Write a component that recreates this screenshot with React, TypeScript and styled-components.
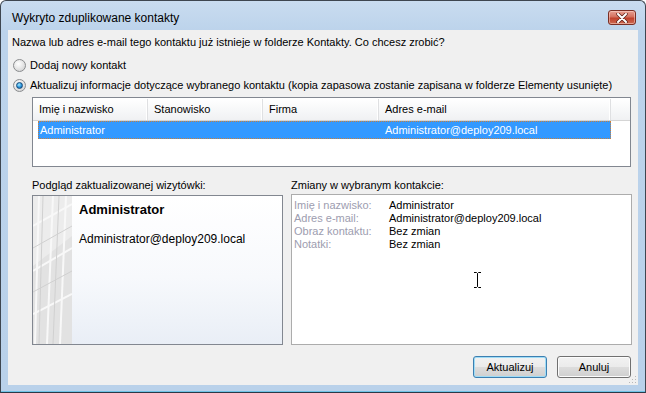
import React from 'react';
import styled, { createGlobalStyle } from 'styled-components';

const GlobalStyle = createGlobalStyle`
  html, body {
    margin: 0;
    padding: 0;
    background: #ffffff;
  }
  body {
    font-family: "Liberation Sans", Arial, sans-serif;
    font-size: 11px;
    color: #000;
  }
  * {
    box-sizing: border-box;
  }
`;

const Window = styled.div`
  width: 646px;
  height: 393px;
  display: flex;
  flex-direction: column;
  border: 1px solid #3e4650;
  border-bottom-color: #2a3a48;
  border-radius: 6px 6px 0 0;
  background: linear-gradient(180deg, #c9dcf0 0px, #bcd3eb 30px, #b9d1ea 100%);
  box-shadow: inset 0 -1px 0 #6fc3e6;
  overflow: hidden;
`;

const TitleBar = styled.div`
  height: 29px;
  flex: none;
  display: flex;
  align-items: center;
  justify-content: space-between;
  padding: 4px 9px 0 11px;
`;

const Title = styled.span`
  font-size: 12px;
  color: #000;
`;

const CloseButton = styled.div`
  width: 28px;
  height: 15px;
  border: 1px solid #7a2e24;
  border-radius: 3px;
  background: linear-gradient(180deg, #e8a093 0%, #d4705e 45%, #c0412c 55%, #cc6a52 100%);
  box-shadow: inset 0 0 0 1px rgba(255, 220, 210, 0.5);
  display: flex;
  align-items: center;
  justify-content: center;
`;

const Content = styled.div`
  flex: 1;
  margin: 0 7px 7px 7px;
  background: #f0f0f0;
  padding: 0 7px 0 4px;
  position: relative;
  display: flex;
  flex-direction: column;
`;

const Prompt = styled.div`
  margin-top: 5px;
  line-height: 14px;
  white-space: nowrap;
`;

const RadioGroup = styled.div`
  margin-top: 6px;
  display: flex;
  flex-direction: column;
`;

const RadioRow = styled.label`
  height: 20px;
  display: flex;
  align-items: center;
  gap: 4px;
  white-space: nowrap;
`;

const RadioCircle = styled.span<{ $checked?: boolean }>`
  width: 13px;
  height: 13px;
  margin-left: 1px;
  border-radius: 50%;
  border: 1px solid #8a8c8e;
  background: radial-gradient(circle at 40% 35%, #ffffff 0%, #e8e8e8 45%, #c9cacb 100%);
  display: flex;
  align-items: center;
  justify-content: center;
  flex: none;

  &::after {
    content: '';
    display: ${(p) => (p.$checked ? 'block' : 'none')};
    width: 7px;
    height: 7px;
    border-radius: 50%;
    border: 1px solid #174b7a;
    background: radial-gradient(circle at 40% 35%, #a8ecff 0%, #2f9ae0 50%, #0b4f8e 100%);
    box-sizing: border-box;
  }
`;

const Table = styled.div`
  margin-left: 20px;
  margin-top: 2px;
  height: 70px;
  border: 1px solid #828790;
  background: #ffffff;
  padding-top: 1px;
  display: flex;
  flex-direction: column;
`;

const HeaderRow = styled.div`
  height: 22px;
  display: flex;
  background: linear-gradient(180deg, #ffffff 0%, #f7f8f9 50%, #f0f1f3 100%);
  border-bottom: 1px solid #d5d5d5;
`;

const HeaderCell = styled.div<{ $w?: number }>`
  ${(p) => (p.$w ? `width: ${p.$w}px;` : 'flex: 1;')}
  flex-shrink: 0;
  padding-left: 6px;
  line-height: 21px;
  border-right: 1px solid #dfe0e2;
  box-shadow: inset -1px 0 0 #ffffff;
  white-space: nowrap;
`;

const HeaderFiller = styled.div`
  flex: 1;
`;

const DataRow = styled.div`
  margin-left: 5px;
  width: 573px;
  height: 18px;
  display: flex;
  background: #3399ff;
  border: 1px dotted #c87f3a;
  color: #ffffff;
`;

const DataCell = styled.div<{ $w?: number; $pad: number }>`
  ${(p) => (p.$w ? `width: ${p.$w}px;` : 'flex: 1;')}
  flex-shrink: 0;
  padding-left: ${(p) => p.$pad}px;
  line-height: 16px;
  white-space: nowrap;
`;

const Panels = styled.div`
  margin-left: 20px;
  margin-top: 11px;
  display: grid;
  grid-template-columns: 251px 341px;
  column-gap: 8px;
`;

const PanelLabel = styled.div`
  height: 16px;
  line-height: 15px;
  white-space: nowrap;
`;

const Card = styled.div`
  height: 150px;
  margin-top: 1px;
  border: 1px solid #828790;
  display: flex;
`;

const CardStrip = styled.div`
  width: 39px;
  flex: none;
  background: linear-gradient(180deg, #d9d9d9 0%, #e6e6e6 50%, #eeeeee 100%);
  overflow: hidden;
`;

const CardBody = styled.div`
  flex: 1;
  padding: 6px 0 0 7px;
  background: linear-gradient(180deg, #ffffff 0%, #f7f9fc 55%, #e9eef6 100%);
`;

const CardName = styled.div`
  font-size: 13px;
  font-weight: bold;
  line-height: 16px;
`;

const CardEmail = styled.div`
  margin-top: 14px;
  font-size: 12px;
  line-height: 14px;
`;

const ChangesBox = styled.div`
  height: 151px;
  border: 1px solid #acacac;
  background: #ffffff;
  padding: 4px 2px;
  position: relative;
  display: grid;
  grid-template-columns: 95px 1fr;
  grid-auto-rows: 13px;
  align-content: start;
`;

const ChangeKey = styled.div`
  color: #9d9daf;
  line-height: 13px;
  white-space: nowrap;
`;

const ChangeValue = styled.div`
  line-height: 13px;
  white-space: nowrap;
`;

const Cursor = styled.svg`
  position: absolute;
  left: 182px;
  top: 77px;
`;

const ButtonRow = styled.div`
  margin-top: 11px;
  display: flex;
  justify-content: flex-end;
  gap: 10px;
`;

const Button = styled.button<{ $default?: boolean }>`
  width: 74px;
  height: 22px;
  padding: 0;
  font-family: "Liberation Sans", Arial, sans-serif;
  font-size: 11px;
  color: #000;
  border-radius: 3px;
  border: 1px solid ${(p) => (p.$default ? '#3c7fb1' : '#707070')};
  background: linear-gradient(180deg, #f2f2f2 0%, #ebebeb 49%, #dddddd 50%, #cfcfcf 100%);
  box-shadow: inset 0 0 0 1px ${(p) => (p.$default ? '#9fdcf6' : '#fcfcfc')};
`;

const Grip = styled.svg`
  position: absolute;
  right: 1px;
  bottom: 1px;
`;

const StripArt = () => (
  <svg width="39" height="148" viewBox="0 0 39 148">
    <rect width="39" height="148" fill="#e2e2e2" />
    <path d="M0 0 L39 0 L39 40 L0 70 Z" fill="#ececec" />
    <g stroke="#f8f8f8" strokeWidth="2" fill="none">
      <line x1="6" y1="0" x2="2" y2="148" />
      <line x1="20" y1="0" x2="14" y2="148" />
      <line x1="33" y1="0" x2="27" y2="148" />
      <line x1="0" y1="30" x2="39" y2="8" />
      <line x1="0" y1="75" x2="39" y2="52" />
      <line x1="0" y1="118" x2="39" y2="98" />
    </g>
    <g stroke="#d0d0d0" strokeWidth="1" fill="none">
      <line x1="10" y1="0" x2="6" y2="148" />
      <line x1="26" y1="0" x2="20" y2="148" />
      <line x1="0" y1="52" x2="39" y2="30" />
      <line x1="0" y1="96" x2="39" y2="75" />
    </g>
  </svg>
);

const changes = [
  ['Imię i nazwisko:', 'Administrator'],
  ['Adres e-mail:', 'Administrator@deploy209.local'],
  ['Obraz kontaktu:', 'Bez zmian'],
  ['Notatki:', 'Bez zmian'],
];

const App = () => (
  <>
    <GlobalStyle />
    <Window>
      <TitleBar>
        <Title>Wykryto zduplikowane kontakty</Title>
        <CloseButton>
          <svg width="12" height="10" viewBox="0 0 12 10">
            <path d="M2 1 L10 9 M10 1 L2 9" stroke="#5a2018" strokeWidth="3.4" strokeLinecap="round" />
            <path d="M2 1 L10 9 M10 1 L2 9" stroke="#ffffff" strokeWidth="2" strokeLinecap="round" />
          </svg>
        </CloseButton>
      </TitleBar>
      <Content>
        <Prompt>Nazwa lub adres e-mail tego kontaktu już istnieje w folderze Kontakty. Co chcesz zrobić?</Prompt>
        <RadioGroup>
          <RadioRow>
            <RadioCircle />
            Dodaj nowy kontakt
          </RadioRow>
          <RadioRow>
            <RadioCircle $checked />
            Aktualizuj informacje dotyczące wybranego kontaktu (kopia zapasowa zostanie zapisana w folderze Elementy usunięte)
          </RadioRow>
        </RadioGroup>
        <Table>
          <HeaderRow>
            <HeaderCell $w={115}>Imię i nazwisko</HeaderCell>
            <HeaderCell $w={115}>Stanowisko</HeaderCell>
            <HeaderCell $w={116}>Firma</HeaderCell>
            <HeaderCell $w={232}>Adres e-mail</HeaderCell>
            <HeaderFiller />
          </HeaderRow>
          <DataRow>
            <DataCell $w={110} $pad={1}>Administrator</DataCell>
            <DataCell $w={115} $pad={6} />
            <DataCell $w={116} $pad={6} />
            <DataCell $pad={5}>Administrator@deploy209.local</DataCell>
          </DataRow>
        </Table>
        <Panels>
          <div>
            <PanelLabel>Podgląd zaktualizowanej wizytówki:</PanelLabel>
            <Card>
              <CardStrip>
                <StripArt />
              </CardStrip>
              <CardBody>
                <CardName>Administrator</CardName>
                <CardEmail>Administrator@deploy209.local</CardEmail>
              </CardBody>
            </Card>
          </div>
          <div>
            <PanelLabel>Zmiany w wybranym kontakcie:</PanelLabel>
            <ChangesBox>
              {changes.map(([k, v]) => (
                <React.Fragment key={k}>
                  <ChangeKey>{k}</ChangeKey>
                  <ChangeValue>{v}</ChangeValue>
                </React.Fragment>
              ))}
              <Cursor width="7" height="16" viewBox="0 0 7 16">
                <path d="M0 0.5 H2.5 L3.5 1.5 L4.5 0.5 H7 M3.5 1.5 V14.5 M0 15.5 H2.5 L3.5 14.5 L4.5 15.5 H7" stroke="#000" strokeWidth="1" fill="none" />
              </Cursor>
            </ChangesBox>
          </div>
        </Panels>
        <ButtonRow>
          <Button $default>Aktualizuj</Button>
          <Button>Anuluj</Button>
        </ButtonRow>
        <Grip width="10" height="10" viewBox="0 0 10 10">
          <g fill="#b8b8b8">
            <rect x="8" y="2" width="1" height="1" />
            <rect x="5" y="5" width="1" height="1" />
            <rect x="8" y="5" width="1" height="1" />
            <rect x="2" y="8" width="1" height="1" />
            <rect x="5" y="8" width="1" height="1" />
            <rect x="8" y="8" width="1" height="1" />
          </g>
        </Grip>
      </Content>
    </Window>
  </>
);

export default App;
